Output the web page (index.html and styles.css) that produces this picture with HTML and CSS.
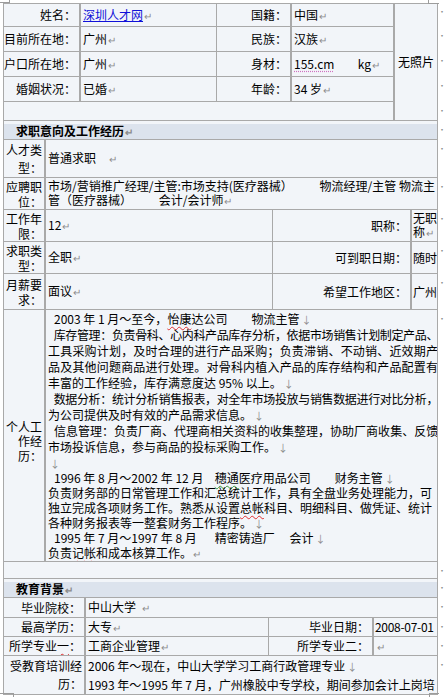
FILE: index.html
```html
<!DOCTYPE html>
<html lang="zh-CN">
<head>
<meta charset="utf-8">
<title>个人简历</title>
<link rel="stylesheet" href="styles.css">
</head>
<body>
<div class="page">
  <span class="corner corner-tl"></span>
  <span class="corner corner-tr"></span>
  <span class="corner corner-bl"></span>
  <span class="corner corner-br"></span>

  <table class="grid sec1">
    <colgroup>
      <col class="s1-a"><col class="s1-b"><col class="s1-c"><col class="s1-d"><col class="s1-e"><col class="eor-col">
    </colgroup>
    <tr class="h23">
      <td class="lab">姓名：</td>
      <td class="val"><a class="link" href="#">深圳人才网</a><span class="pm">↵</span></td>
      <td class="lab">国籍：</td>
      <td class="val">中国<span class="pm">↵</span></td>
      <td class="photo" rowspan="5">无照片</td>
      <td class="eor">·</td>
    </tr>
    <tr class="h25">
      <td class="lab">目前所在地：</td>
      <td class="val">广州<span class="pm">↵</span></td>
      <td class="lab">民族：</td>
      <td class="val">汉族<span class="pm">↵</span></td>
      <td class="eor">·</td>
    </tr>
    <tr class="h25">
      <td class="lab">户口所在地：</td>
      <td class="val">广州<span class="pm">↵</span></td>
      <td class="lab">身材：</td>
      <td class="val"><span class="squig-pink">155.cm</span>&emsp;&ensp;&nbsp; kg<span class="pm">↵</span></td>
      <td class="eor">·</td>
    </tr>
    <tr class="h25">
      <td class="lab">婚姻状况：</td>
      <td class="val">已婚<span class="pm">↵</span></td>
      <td class="lab">年龄：</td>
      <td class="val">34 岁<span class="pm">↵</span></td>
      <td class="eor">·</td>
    </tr>
    <tr class="h19">
      <td class="blank" colspan="4"></td>
      <td class="eor">·</td>
    </tr>
  </table>

  <table class="grid sec2">
    <colgroup>
      <col class="s2-a"><col class="s2-b"><col class="s2-c"><col class="s2-d"><col class="eor-col">
    </colgroup>
    <tr class="h17">
      <td class="head" colspan="4">求职意向及工作经历<span class="pm">↵</span></td>
      <td class="eor">·</td>
    </tr>
    <tr class="h38">
      <td class="lab2 loose">人才类<br>型：</td>
      <td class="val" colspan="3">普通求职&ensp;&ensp;<span class="pm">↵</span></td>
      <td class="eor">·</td>
    </tr>
    <tr class="h32">
      <td class="lab2">应聘职<br>位：</td>
      <td class="val two-line" colspan="3">市场/营销推广经理/主管:市场支持(医疗器械）&emsp;&emsp; 物流经理/主管 物流主<br>管（医疗器械）&emsp;&emsp;&nbsp;会计/会计师<span class="pm">↵</span></td>
      <td class="eor">·</td>
    </tr>
    <tr class="h32">
      <td class="lab2">工作年<br>限：</td>
      <td class="val">12<span class="pm">↵</span></td>
      <td class="lab">职称：</td>
      <td class="val narrow">无职<br>称<span class="pm">↵</span></td>
      <td class="eor">·</td>
    </tr>
    <tr class="h32">
      <td class="lab2">求职类<br>型：</td>
      <td class="val">全职<span class="pm">↵</span></td>
      <td class="lab">可到职日期：</td>
      <td class="val narrow">随时</td>
      <td class="eor">·</td>
    </tr>
    <tr class="h36">
      <td class="lab2">月薪要<br>求：</td>
      <td class="val">面议<span class="pm">↵</span></td>
      <td class="lab">希望工作地区：</td>
      <td class="val narrow">广州</td>
      <td class="eor">·</td>
    </tr>
    <tr class="h252">
      <td class="lab2 hist-lab">个人工<br>作经<br>历：</td>
      <td class="hist" colspan="3">
        <div class="para p1">
          <div class="ln">&ensp;2003 年 1 月～至今，<span class="squig-red">怡康</span>达公司&emsp;&emsp;物流主管<span class="lb">↓</span></div>
          <div class="ln full tight">&ensp;库存管理：负责骨科、心内科产品库存分析，依据市场销售计划制定产品、</div>
          <div class="ln full">工具采购计划，及时合理的进行产品采购；负责滞销、不动销、近效期产</div>
          <div class="ln full">品及其他问题商品进行处理。对骨科内植入产品的库存结构和产品配置有</div>
          <div class="ln">丰富的工作经验，库存满意度达 95% 以上。<span class="lb">↓</span></div>
          <div class="ln full tight">&ensp;数据分析：统计分析销售报表，对全年市场投放与销售数据进行对比分析，</div>
          <div class="ln">为公司提供及时有效的产品需求信息。<span class="lb">↓</span></div>
          <div class="ln full tight-s">&ensp;信息管理：负责厂商、代理商相关资料的收集整理，协助厂商收集、反馈</div>
          <div class="ln">市场投诉信息，参与商品的投标采购工作。<span class="lb">↓</span></div>
        </div>
        <div class="para p2">
          <div class="ln"><span class="lb">↓</span></div>
          <div class="ln">&ensp;1996 年 8 月～2002 年 12 月&ensp;&nbsp;&nbsp;<span class="squig-green">穗通</span>医疗用品公司&emsp;&emsp;财务主管<span class="lb">↓</span></div>
          <div class="ln">负责财务部的日常管理工作和汇总统计工作，具有全盘业务处理能力，可</div>
          <div class="ln">独立完成各项财务工作。熟悉从设置<span class="squig-red">总帐</span>科目、明细科目、做凭证、统计</div>
          <div class="ln">各种财务报表等一整套财务工作程序。<span class="lb">↓</span></div>
          <div class="ln">&ensp;1995 年 7 月～1997 年 8 月&emsp;&ensp;精密铸造厂&emsp;&nbsp;会计<span class="lb">↓</span></div>
          <div class="ln">负责<span class="squig-red">记帐</span>和成本核算工作。<span class="pm">↵</span></div>
        </div>
      </td>
      <td class="eor">·</td>
    </tr>
    <tr class="h17">
      <td class="blank" colspan="4"></td>
      <td class="eor">·</td>
    </tr>
  </table>

  <table class="grid sec3">
    <colgroup>
      <col class="s3-a"><col class="s3-b"><col class="s3-c"><col class="s3-d"><col class="eor-col">
    </colgroup>
    <tr class="h18">
      <td class="head" colspan="4">教育背景<span class="pm">↵</span></td>
      <td class="eor">·</td>
    </tr>
    <tr class="h20">
      <td class="lab">毕业院校：</td>
      <td class="val" colspan="3">中山大学&nbsp; <span class="pm">↵</span></td>
      <td class="eor">·</td>
    </tr>
    <tr class="h19">
      <td class="lab">最高学历：</td>
      <td class="val">大专<span class="pm">↵</span></td>
      <td class="lab">毕业日期：</td>
      <td class="val date">2008-07-01</td>
      <td class="eor">·</td>
    </tr>
    <tr class="h19">
      <td class="lab">所学专业<span class="squig-red">一</span>：</td>
      <td class="val">工商企业管理<span class="pm">↵</span></td>
      <td class="lab">所学专业二：</td>
      <td class="val"><span class="pm">↵</span></td>
      <td class="eor">·</td>
    </tr>
    <tr class="h36">
      <td class="lab2 edu-lab">受教育培训经<br>历：</td>
      <td class="val edu" colspan="3">2006 年～现在，中山大学学习工商行政管理专业<span class="lb">↓</span><br>1993 年～1995 年 7 月，广州橡胶中专学校，期间参加会计上岗培</td>
      <td class="eor">·</td>
    </tr>
  </table>
</div>
</body>
</html>
```

FILE: styles.css
```css
* {
  box-sizing: border-box;
}

html,
body {
  margin: 0;
  padding: 0;
  background: #ffffff;
}

body {
  font-family: "Noto Sans CJK SC", "Noto Sans", sans-serif;
  font-size: 12px;
  color: #000000;
}

.page {
  position: relative;
  width: 445px;
  height: 697px;
  overflow: hidden;
  padding: 3px 0 0 3px;
}

/* Word text-boundary corner marks */
.corner {
  position: absolute;
  border: 0 solid #9c9c9c;
}
.corner-tl {
  left: 0;
  top: 0;
  width: 10px;
  height: 3px;
  border-right-width: 1px;
  border-bottom-width: 1px;
}
.corner-tr {
  left: 428px;
  top: 0;
  width: 11px;
  height: 4px;
  border-left-width: 1px;
  border-bottom-width: 1px;
}
.corner-bl {
  left: 0;
  top: 693px;
  width: 14px;
  height: 4px;
  border-top-width: 1px;
  border-right-width: 1px;
}
.corner-br {
  left: 429px;
  top: 693px;
  width: 10px;
  height: 4px;
  border-top-width: 1px;
  border-left-width: 1px;
}

/* tables: separate model, each cell draws its right and bottom rule */
.grid {
  border-collapse: separate;
  border-spacing: 0;
  table-layout: fixed;
  width: 441px;
}

.grid td {
  padding: 0 2px;
  vertical-align: middle;
  background: #f2f5f9;
  border: 0 solid #a9a9a9;
  border-right-width: 1px;
  border-bottom-width: 1px;
  white-space: nowrap;
  overflow: hidden;
  line-height: 14px;
}

.grid tr > td:first-child {
  border-left-width: 1px;
}

.sec1 tr:first-child > td {
  border-top-width: 1px;
}

.grid td.eor {
  background: transparent;
  border: none;
  padding: 5px 0 0 0;
  font-size: 8px;
  line-height: 8px;
  color: #8a8a8a;
  vertical-align: top;
  text-align: left;
  overflow: visible;
}

.eor-col { width: 6px; }

.s1-a { width: 78px; }
.s1-b { width: 136px; }
.s1-c { width: 75px; }
.s1-d { width: 102px; }
.s1-e { width: 44px; }

.s2-a { width: 43px; }
.s2-b { width: 227px; }
.s2-c { width: 139px; }
.s2-d { width: 26px; }

.s3-a { width: 83px; }
.s3-b { width: 183px; }
.s3-c { width: 105px; }
.s3-d { width: 64px; }

.sec1 .h23 > td { height: 24px; }
.h17 > td { height: 17px; }
.h18 > td { height: 18px; }
.h19 > td { height: 19px; }
.h20 > td { height: 20px; }
.h25 > td { height: 25px; }
.h32 > td { height: 32px; }
.h36 > td { height: 36px; }
.h38 > td { height: 38px; }
.h252 > td { height: 252px; }

.grid td.lab {
  text-align: right;
  padding: 0 3px 0 0;
  border-right-width: 2px;
}

.grid td.lab2 {
  text-align: right;
  white-space: nowrap;
  padding: 0 2px 0 0;
  line-height: 15px;
  border-right-width: 2px;
}

.grid td.lab2.loose {
  line-height: 18px;
}

.grid td.val {
  text-align: left;
  padding: 0 1px 0 2px;
}

.grid td.val.narrow {
  padding: 0 0 0 1px;
  line-height: 14px;
}

.grid td.val.date {
  padding: 0 0 0 1px;
  letter-spacing: -0.3px;
}

.grid td.two-line {
  line-height: 14px;
}

.grid td.edu {
  line-height: 18px;
  vertical-align: top;
  padding-top: 1px;
}

.grid td.edu-lab {
  line-height: 18px;
  vertical-align: top;
  padding-top: 1px;
}

.grid td.photo {
  text-align: center;
  border-left-width: 1px;
}

.grid td.head {
  font-weight: bold;
  padding: 3px 0 0 12px;
  line-height: 14px;
  background: linear-gradient(to bottom, #f2f5f9 0, #f2f5f9 3px, #dce3ed 3px);
}

.grid td.blank {
  background: #f2f5f9;
}

.link {
  color: #1010d8;
  text-decoration: underline;
}

.pm {
  color: #8c8c8c;
  font-size: 10px;
  margin-left: 1px;
}

.lb {
  color: #8c8c8c;
  font-size: 10px;
  margin-left: 2px;
}

.squig-red {
  text-decoration: underline wavy #e03030;
  text-decoration-thickness: 1px;
  text-underline-offset: 2px;
}

.squig-green {
  text-decoration: underline wavy #3a9a3a;
  text-decoration-thickness: 1px;
  text-underline-offset: 2px;
}

.squig-pink {
  text-decoration: underline dotted #d070c0;
  text-underline-offset: 2px;
}

/* work history */
.grid td.hist {
  vertical-align: top;
  padding: 1px 0 0 2px;
}

.grid td.hist-lab {
  line-height: 14.5px;
  padding-top: 12px;
}

.para {
  display: flex;
  flex-direction: column;
}

.p1 .ln {
  line-height: 16px;
  height: 16px;
}

.p2 .ln {
  line-height: 15px;
  height: 15px;
}

.ln {
  white-space: nowrap;
  text-align: left;
}

.ln.full {
  text-align: justify;
  text-align-last: justify;
  width: 390px;
}

.ln.tight {
  letter-spacing: -0.4px;
}

.ln.tight-s {
  letter-spacing: -0.15px;
}
```
